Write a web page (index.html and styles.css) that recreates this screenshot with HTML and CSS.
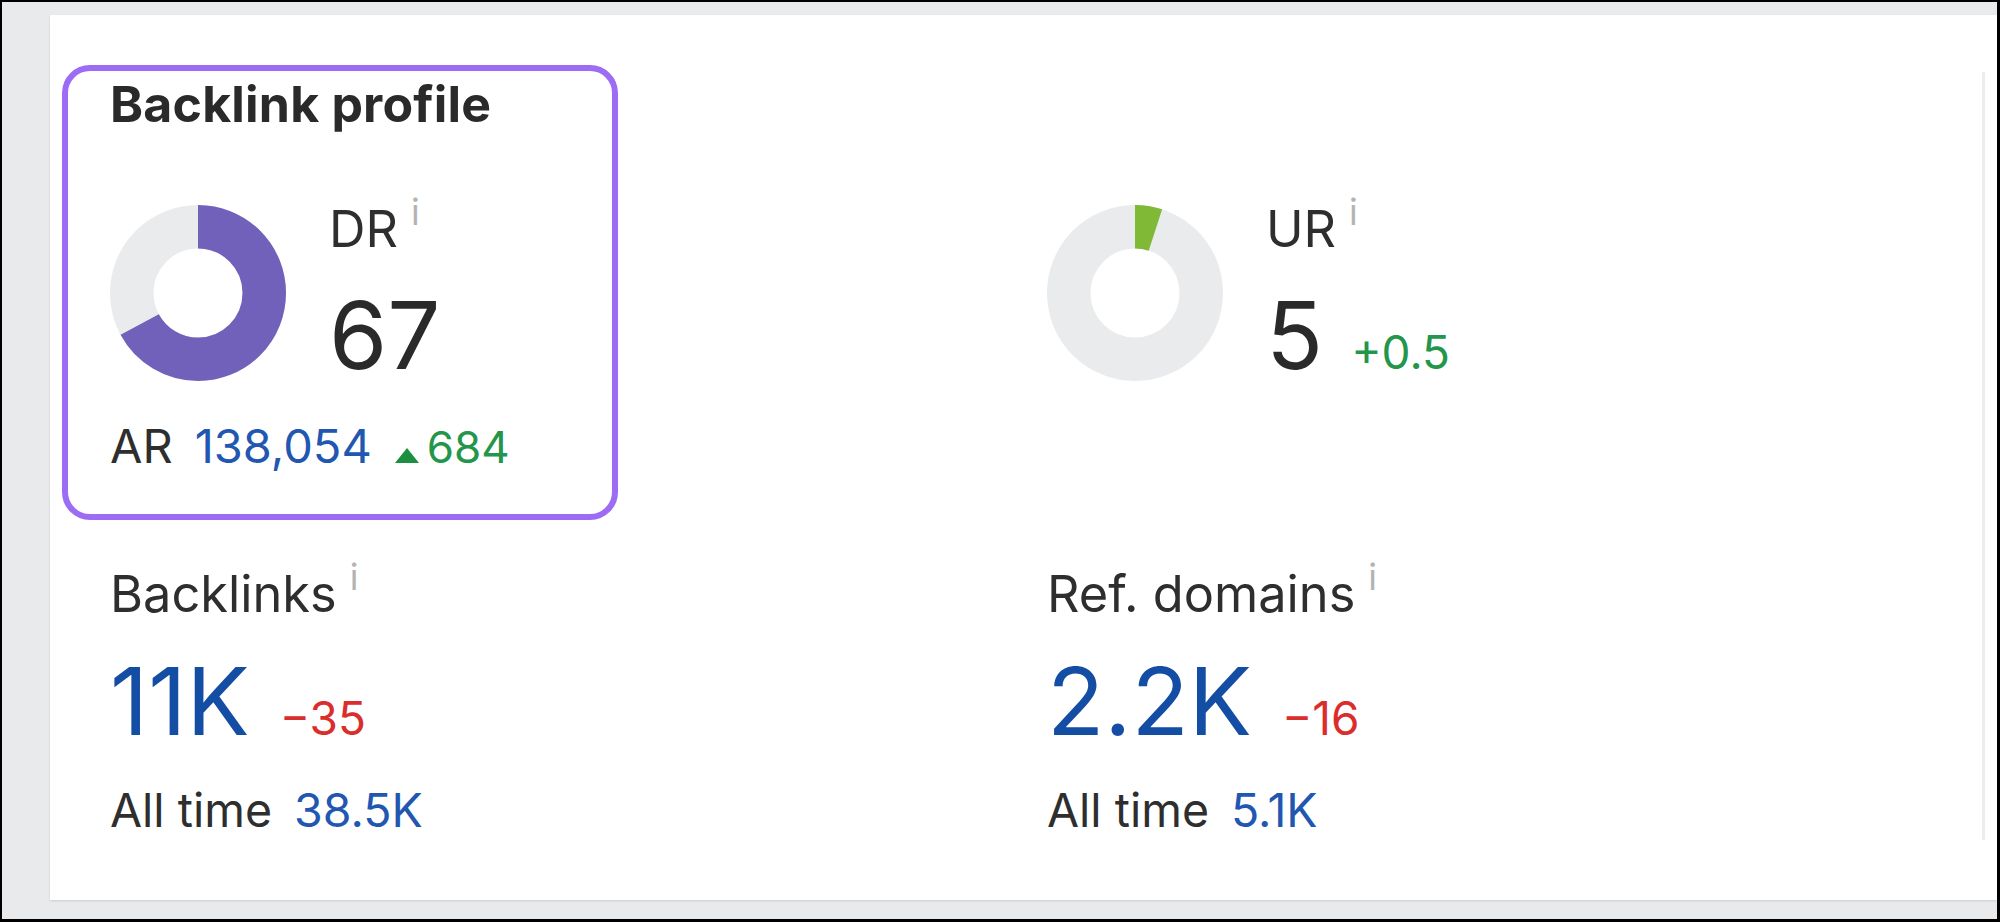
FILE: index.html
```html
<!DOCTYPE html>
<html lang="en">
<head>
<meta charset="utf-8">
<title>Backlink profile</title>
<link rel="stylesheet" href="styles.css">
</head>
<body>
<div class="frame">
  <div class="card">
    <div class="highlight"></div>
    <div class="scroll-line"></div>
    <div class="grid">
      <h2 class="title">Backlink profile</h2>

      <div class="rating dr">
        <svg class="donut" viewBox="0 0 176 176" width="176" height="176">
          <circle class="ring-bg" cx="88" cy="88" r="66.25"/>
          <circle class="ring-dr" cx="88" cy="88" r="66.25" stroke-dasharray="278.9 416.3" transform="rotate(-90 88 88)"/>
        </svg>
        <div class="rating-text">
          <div class="label">DR<span class="info">i</span></div>
          <div class="value rating-value"><span class="big dark">67</span></div>
        </div>
      </div>

      <div class="rating ur">
        <svg class="donut" viewBox="0 0 176 176" width="176" height="176">
          <circle class="ring-bg" cx="88" cy="88" r="66.25"/>
          <circle class="ring-ur" cx="88" cy="88" r="66.25" stroke-dasharray="20.8 416.3" transform="rotate(-90 88 88)"/>
        </svg>
        <div class="rating-text">
          <div class="label">UR<span class="info">i</span></div>
          <div class="value rating-value"><span class="big dark">5</span><span class="delta small-delta green">+0.5</span></div>
        </div>
      </div>

      <div class="ar">
        <span class="ar-label">AR</span>
        <span class="ar-num blue">138,054</span>
        <span class="tri"></span>
        <span class="ar-up green">684</span>
      </div>

      <div class="metric bl">
        <div class="label">Backlinks<span class="info">i</span></div>
        <div class="value metric-value"><span class="big blue-big">11K</span><span class="delta red">−35</span></div>
        <div class="sub"><span>All time</span><span class="sub-num blue">38.5K</span></div>
      </div>

      <div class="metric rd">
        <div class="label">Ref. domains<span class="info">i</span></div>
        <div class="value metric-value"><span class="big blue-big">2.2K</span><span class="delta red">−16</span></div>
        <div class="sub"><span>All time</span><span class="sub-num blue">5.1K</span></div>
      </div>
    </div>
  </div>
</div>
</body>
</html>
```
FILE: styles.css
```css
* { box-sizing: border-box; }

html, body {
  margin: 0;
  padding: 0;
  background: #000;
}

body {
  font-family: "Inter", "Liberation Sans", sans-serif;
  color: #2e2e2e;
}

.frame {
  width: 2000px;
  height: 922px;
  border-style: solid;
  border-color: #000;
  border-width: 2px 3px 3px 2px;
  background: #e9eaeb;
  padding: 13px 0 0 48px;
}

.card {
  position: relative;
  background: #fff;
  height: 885px;
  padding: 59px 0 0 60px;
  box-shadow: 0 1px 2px rgba(0, 0, 0, 0.12);
}

.highlight {
  position: absolute;
  left: 12px;
  top: 50px;
  width: 556px;
  height: 455px;
  border: 6px solid #9d6cf5;
  border-radius: 28px;
  pointer-events: none;
}

.scroll-line {
  position: absolute;
  left: 1932px;
  top: 57px;
  width: 3px;
  height: 768px;
  background: #ededee;
}

.grid {
  display: grid;
  grid-template-columns: 937px 1fr;
  align-items: start;
}

.title {
  grid-column: 1;
  grid-row: 1;
  margin: 0 0 71px 0;
  font-size: 50px;
  line-height: 60px;
  font-weight: 700;
  color: #2a2a2a;
  letter-spacing: 0.2px;
}

.rating {
  display: flex;
  align-items: flex-start;
  gap: 43px;
}
.rating.dr { grid-column: 1; grid-row: 2; }
.rating.ur { grid-column: 2; grid-row: 2; }

.donut { display: block; flex: none; }
.ring-bg { fill: none; stroke: #eaebec; stroke-width: 43.5; }
.ring-dr { fill: none; stroke: #7161bb; stroke-width: 43.5; }
.ring-ur { fill: none; stroke: #7fb935; stroke-width: 43.5; }

.rating-text {
  display: flex;
  flex-direction: column;
}

.label {
  display: flex;
  align-items: flex-start;
  font-size: 50.5px;
  line-height: 48px;
  color: #2e2e2e;
}

.info {
  font-size: 36px;
  line-height: 36px;
  color: #b3b3b3;
  margin: -11px 0 0 13px;
}

.value {
  display: flex;
  align-items: baseline;
}
.rating-value { margin-top: 34px; }
.metric-value { margin-top: 35px; }

.big {
  font-size: 94px;
  line-height: 96px;
}
.dark { color: #2a2a2a; }
.blue-big { color: #144ea4; }

.delta {
  font-size: 46px;
  line-height: 46px;
  margin-left: 30px;
}
.small-delta {
  margin-left: 28px;
}

.red { color: #d92e2b; }
.green { color: #24964b; }
.blue { color: #2157b0; }

.ar {
  grid-column: 1;
  grid-row: 3;
  margin-top: 37px;
  display: flex;
  align-items: baseline;
  font-size: 47px;
  line-height: 52px;
}
.ar-num { margin-left: 22px; }
.tri {
  display: inline-block;
  width: 0;
  height: 0;
  border-left: 12.5px solid transparent;
  border-right: 12.5px solid transparent;
  border-bottom: 15px solid #1c8f41;
  margin-left: 23px;
  margin-bottom: 8px;
}
.ar-up {
  margin-left: 8px;
  font-size: 44px;
}

.metric {
  margin-top: 97px;
}
.metric.bl { grid-column: 1; grid-row: 4; }
.metric.rd { grid-column: 2; grid-row: 4; }

.sub {
  display: flex;
  align-items: baseline;
  margin-top: 35px;
  font-size: 46.5px;
  line-height: 52px;
  color: #2e2e2e;
}
.sub-num { margin-left: 22px; }
```
